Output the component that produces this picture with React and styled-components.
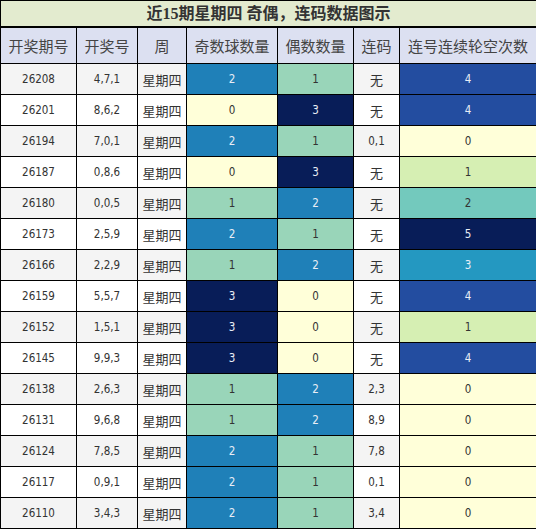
import React from "react";
import styled, { createGlobalStyle } from "styled-components";

const GlobalStyle = createGlobalStyle`
  html, body {
    margin: 0;
    padding: 0;
    background: #ffffff;
  }
`;

const rows = [
  ["26208", "4,7,1", 2, 1, "无", 4],
  ["26201", "8,6,2", 0, 3, "无", 4],
  ["26194", "7,0,1", 2, 1, "0,1", 0],
  ["26187", "0,8,6", 0, 3, "无", 1],
  ["26180", "0,0,5", 1, 2, "无", 2],
  ["26173", "2,5,9", 2, 1, "无", 5],
  ["26166", "2,2,9", 1, 2, "无", 3],
  ["26159", "5,5,7", 3, 0, "无", 4],
  ["26152", "1,5,1", 3, 0, "无", 1],
  ["26145", "9,9,3", 3, 0, "无", 4],
  ["26138", "2,6,3", 1, 2, "2,3", 0],
  ["26131", "9,6,8", 1, 2, "8,9", 0],
  ["26124", "7,8,5", 2, 1, "7,8", 0],
  ["26117", "0,9,1", 2, 1, "0,1", 0],
  ["26110", "3,4,3", 2, 1, "3,4", 0],
];

// colour scales (yellow -> green -> blue)
const countScale = ["#ffffd9", "#99d5b9", "#1f80b8", "#081d58"];
const gapScale = ["#ffffd9", "#d6efb3", "#73c9bd", "#2498c1", "#234da0", "#081d58"];
const darkOnes = ["#1f80b8", "#081d58", "#2498c1", "#234da0"];

const colWidths = [76, 61, 49, 91, 76, 46, 137];
const headers = ["开奖期号", "开奖号", "周", "奇数球数量", "偶数数量", "连码", "连号连续轮空次数"];

const Table = styled.table`
  width: 536px;
  table-layout: fixed;
  border-collapse: collapse;
  border: 1px solid #000;
  font-family: "Noto Sans CJK SC", sans-serif;
`;

const TitleCell = styled.th`
  height: 25px;
  padding: 0;
  background: #e3ebcf;
  border: 1px solid #000;
  border-bottom: 2px solid #000;
  color: #333;
  font-family: "Liberation Serif", "Noto Sans CJK SC", serif;
  font-size: 16px;
  font-weight: bold;
  line-height: 25px;
  text-align: center;
`;

const HeadCell = styled.th`
  height: 35px;
  padding: 0;
  background: #dce0f1;
  border: 1px solid #000;
  color: #444;
  font-size: 15px;
  font-weight: normal;
  text-align: center;
  white-space: nowrap;
`;

const Row = styled.tr`
  background: ${(p) => (p.$odd ? "#f4f4f4" : "#ffffff")};
`;

const Cell = styled.td`
  height: 30px;
  padding: 0;
  border: 1px solid #000;
  color: #333;
  text-align: center;
  font-family: ${(p) =>
    p.$cjk
      ? `"Noto Sans CJK SC", sans-serif`
      : `"DejaVu Sans Condensed", "DejaVu Sans", sans-serif`};
  font-stretch: condensed;
  font-size: ${(p) => (p.$cjk ? "13px" : "11.5px")};
`;

const HeatCell = styled(Cell)`
  background: ${(p) => p.$bg};
  color: ${(p) => (darkOnes.includes(p.$bg) ? "#e9eef6" : "#333")};
`;

export default function App() {
  return (
    <>
      <GlobalStyle />
      <Table>
        <colgroup>
          {colWidths.map((w, i) => (
            <col key={i} style={{ width: w }} />
          ))}
        </colgroup>
        <thead>
          <tr>
            <TitleCell colSpan={7}>近15期星期四 奇偶，连码数据图示</TitleCell>
          </tr>
          <tr>
            {headers.map((h) => (
              <HeadCell key={h}>{h}</HeadCell>
            ))}
          </tr>
        </thead>
        <tbody>
          {rows.map(([issue, nums, odd, even, link, gap], i) => (
            <Row key={issue} $odd={i % 2 === 0}>
              <Cell>{issue}</Cell>
              <Cell>{nums}</Cell>
              <Cell $cjk>星期四</Cell>
              <HeatCell $bg={countScale[odd]}>{odd}</HeatCell>
              <HeatCell $bg={countScale[even]}>{even}</HeatCell>
              <Cell $cjk={link === "无"}>{link}</Cell>
              <HeatCell $bg={gapScale[gap]}>{gap}</HeatCell>
            </Row>
          ))}
        </tbody>
      </Table>
    </>
  );
}
